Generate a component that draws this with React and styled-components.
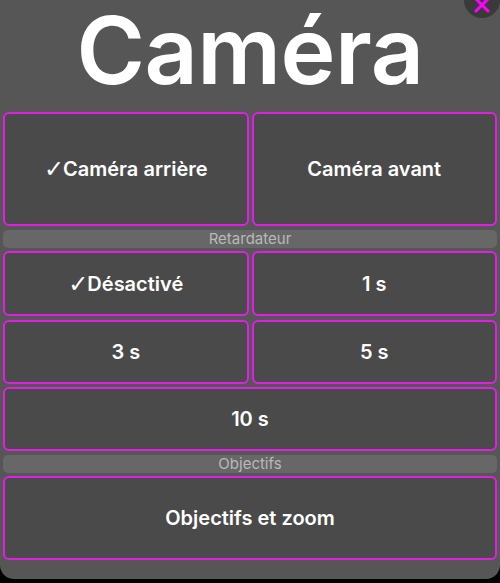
import React, {useState} from 'react'
import styled, {createGlobalStyle} from 'styled-components';

const Global = createGlobalStyle`
  html, body {
    margin: 0;
    background: #000;
    font-family: Inter, "Liberation Sans", Arial, sans-serif;
  }
`;

const Panel = styled.div`
  position: relative;
  width: 500px;
  height: 579px;
  box-sizing: border-box;
  background: #565656;
  border-radius: 0 0 14px 14px;
  padding: 0 3px;
  display: flex;
  flex-direction: column;
  overflow: hidden;
`;

const Title = styled.h1`
  margin: 0;
  height: 112px;
  font-size: 93px;
  font-weight: 600;
  color: #fff;
  text-align: center;
  line-height: 100px;
  letter-spacing: -0.5px;
`;

const Grid = styled.div`
  display: grid;
  grid-template-columns: 1fr 1fr;
  grid-template-rows: 114px 18px 65px 64px 64px 18px 84px;
  gap: 3.5px 3px;
`;

const Option = styled.button`
  grid-column: ${props => props.wide ? '1 / span 2' : 'auto'};
  background: #4a4a4a;
  border: 2px solid #e01ee6;
  border-radius: 6px;
  color: #fff;
  font-family: inherit;
  font-size: 20px;
  font-weight: 600;
  display: flex;
  align-items: center;
  justify-content: center;
  padding: 0;
  cursor: pointer;
`;

const Check = styled.span`
  font-family: "DejaVu Sans", sans-serif;
  font-weight: normal;
  font-size: 24px;
  line-height: 1;
  margin-right: -1px;
`;

const Band = styled.div`
  grid-column: 1 / span 2;
  background: #676767;
  border-radius: 5px;
  color: #b9b9b9;
  font-size: 15px;
  display: flex;
  align-items: center;
  justify-content: center;
`;

const Close = styled.button`
  position: absolute;
  top: -18px;
  right: 0px;
  width: 36px;
  height: 36px;
  border-radius: 50%;
  border: none;
  background: #3a3a3a;
  display: grid;
  place-content: center;
  padding: 0;
`;

const App = () => {
  const [camera, setCamera] = useState('back')
  const [timer, setTimer] = useState('off')
  const check = on => on ? <Check>✓</Check> : null
  return (
    <>
      <Global/>
      <Panel>
        <Close aria-label="Fermer">
          <svg width="16" height="16" viewBox="0 0 16 16" style={{marginTop: 10}}>
            <path d="M2 2 L14 14 M14 2 L2 14" stroke="#ff00ff" strokeWidth="3" strokeLinecap="round"/>
          </svg>
        </Close>
        <Title>Caméra</Title>
        <Grid>
          <Option onClick={() => setCamera('back')}>{check(camera === 'back')}Caméra arrière</Option>
          <Option onClick={() => setCamera('front')}>{check(camera === 'front')}Caméra avant</Option>
          <Band>Retardateur</Band>
          <Option onClick={() => setTimer('off')}>{check(timer === 'off')}Désactivé</Option>
          <Option onClick={() => setTimer('1')}>{check(timer === '1')}1 s</Option>
          <Option onClick={() => setTimer('3')}>{check(timer === '3')}3 s</Option>
          <Option onClick={() => setTimer('5')}>{check(timer === '5')}5 s</Option>
          <Option wide onClick={() => setTimer('10')}>{check(timer === '10')}10 s</Option>
          <Band>Objectifs</Band>
          <Option wide>Objectifs et zoom</Option>
        </Grid>
      </Panel>
    </>
  )
}

export default App;
